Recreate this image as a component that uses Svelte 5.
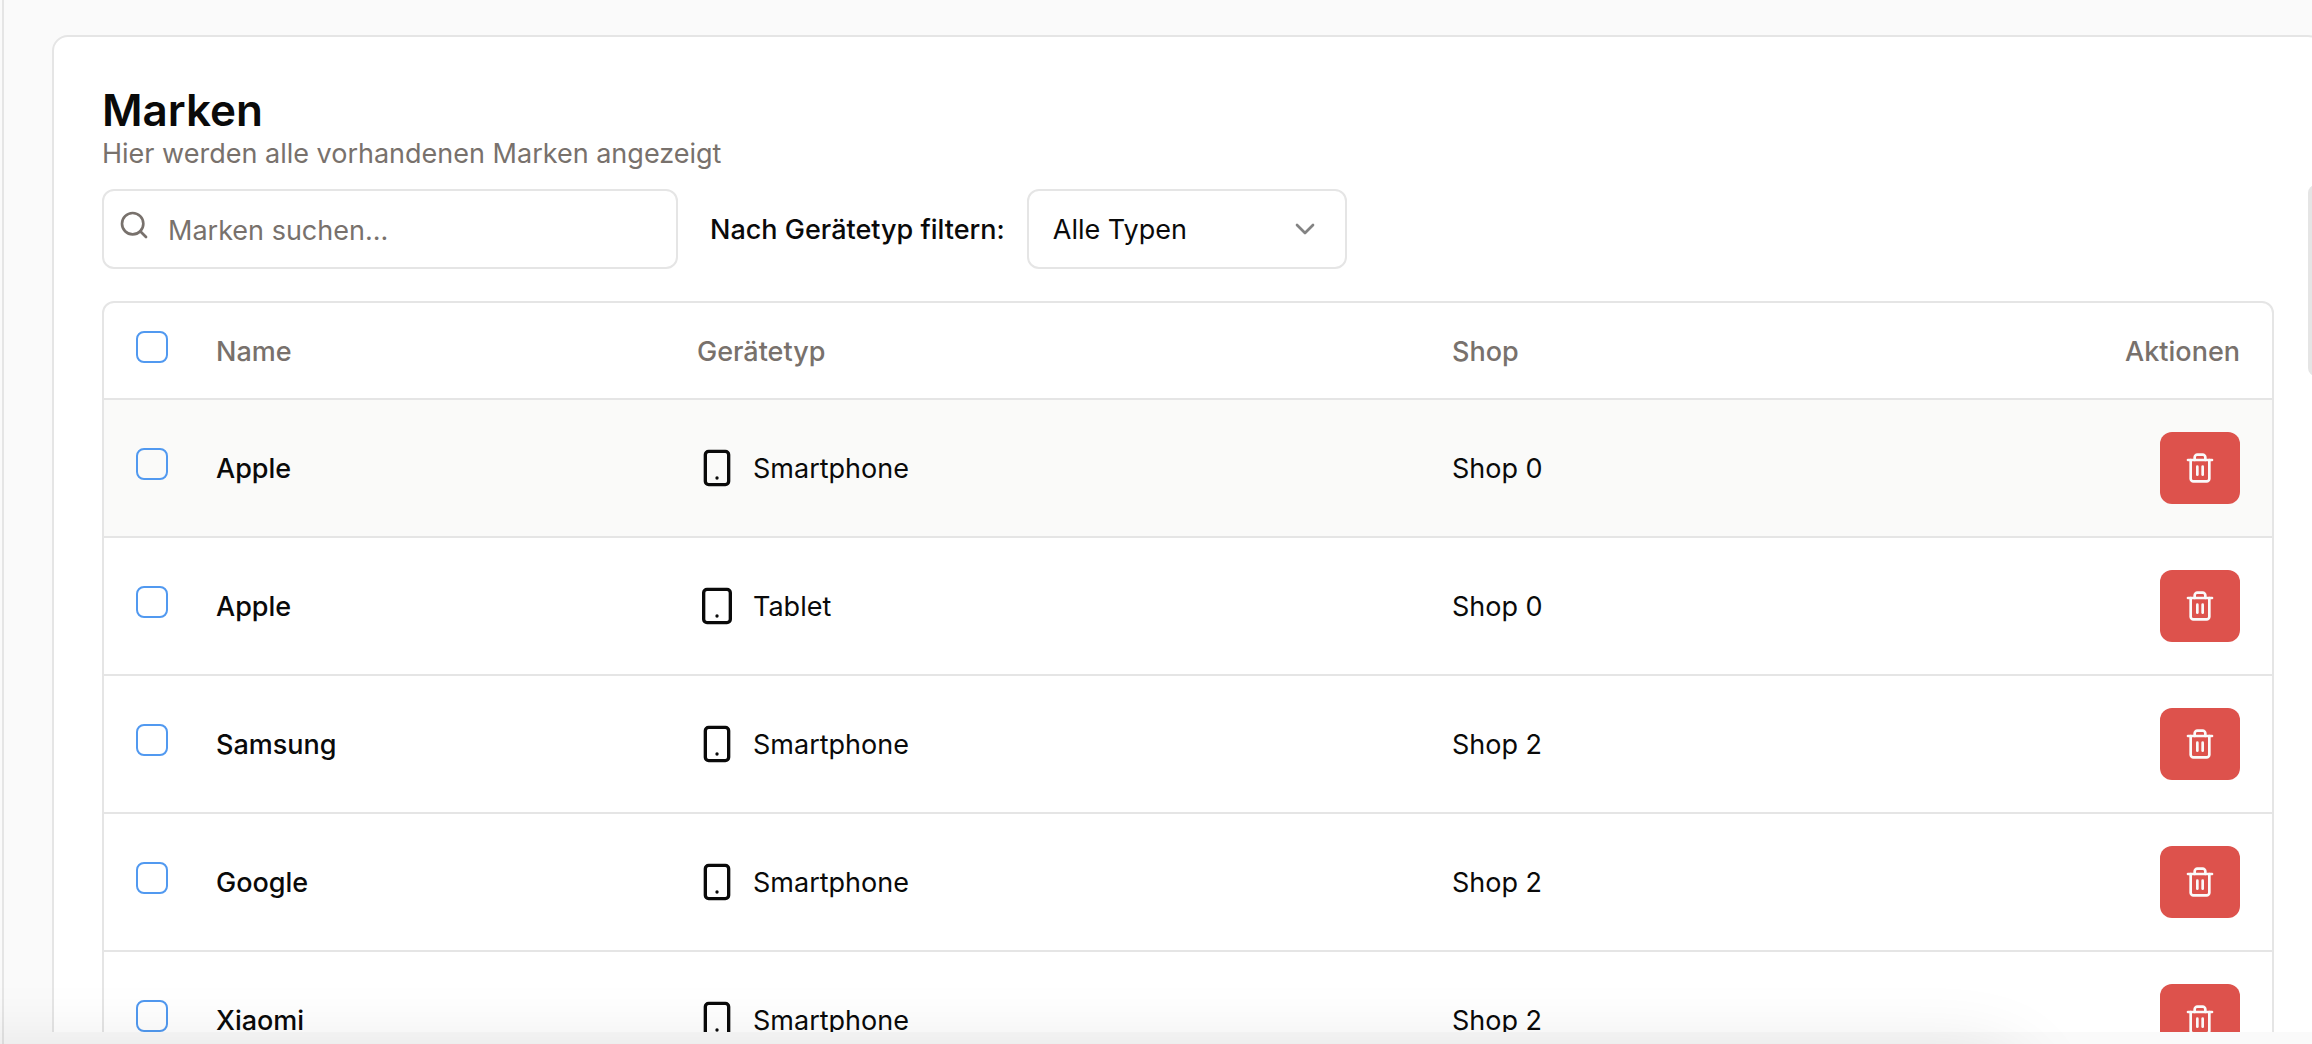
<script>
  const brands = [
    { name: 'Apple', device: 'Smartphone', shop: 'Shop 0' },
    { name: 'Apple', device: 'Tablet', shop: 'Shop 0' },
    { name: 'Samsung', device: 'Smartphone', shop: 'Shop 2' },
    { name: 'Google', device: 'Smartphone', shop: 'Shop 2' },
    { name: 'Xiaomi', device: 'Smartphone', shop: 'Shop 2' }
  ];
</script>

<div class="page">
  <main class="scroller">
    <section class="card">
      <h1>Marken</h1>
      <p class="subtitle">Hier werden alle vorhandenen Marken angezeigt</p>

      <div class="toolbar">
        <div class="search">
          <svg class="icon" viewBox="0 0 24 24" aria-hidden="true">
            <circle cx="11" cy="11" r="8" />
            <path d="m21 21-4.3-4.3" />
          </svg>
          <input type="text" placeholder="Marken suchen..." aria-label="Marken suchen" />
        </div>
        <div class="filter">
          <label for="device-filter">Nach Gerätetyp filtern:</label>
          <div class="select">
            <select id="device-filter">
              <option>Alle Typen</option>
              <option>Smartphone</option>
              <option>Tablet</option>
            </select>
            <svg class="icon" viewBox="0 0 24 24" aria-hidden="true">
              <path d="m6 9 6 6 6-6" />
            </svg>
          </div>
        </div>
      </div>

      <div class="frame">
        <table>
          <colgroup>
            <col class="col-check" />
            <col class="col-name" />
            <col class="col-device" />
            <col />
            <col class="col-actions" />
          </colgroup>
          <thead>
            <tr>
              <th class="control"><input type="checkbox" aria-label="Alle auswählen" /></th>
              <th>Name</th>
              <th>Gerätetyp</th>
              <th>Shop</th>
              <th class="end">Aktionen</th>
            </tr>
          </thead>
          <tbody>
            {#each brands as brand, i}
              <tr class:hovered={i === 0}>
                <td class="control"><input type="checkbox" aria-label={`${brand.name} ${brand.device} auswählen`} /></td>
                <td class="name">{brand.name}</td>
                <td class="control">
                  <div class="device">
                    <svg class="icon" viewBox="0 0 24 24" aria-hidden="true">
                      {#if brand.device === 'Tablet'}
                        <rect x="4" y="2" width="16" height="20" rx="2" />
                      {:else}
                        <rect x="5" y="2" width="14" height="20" rx="2" />
                      {/if}
                      <path d="M12 18h.01" />
                    </svg>
                    <span>{brand.device}</span>
                  </div>
                </td>
                <td>{brand.shop}</td>
                <td class="control end">
                  <button type="button" aria-label={`${brand.name} ${brand.device} löschen`}>
                    <svg class="icon" viewBox="0 0 24 24" aria-hidden="true">
                      <path d="M3 6h18" />
                      <path d="M19 6v14c0 1-1 2-2 2H7c-1 0-2-1-2-2V6" />
                      <path d="M8 6V4c0-1 1-2 2-2h4c1 0 2 1 2 2v2" />
                      <path d="M10 11v6" />
                      <path d="M14 11v6" />
                    </svg>
                  </button>
                </td>
              </tr>
            {/each}
          </tbody>
        </table>
      </div>
    </section>
  </main>
  <div class="thumb"></div>
  <div class="shade"></div>
</div>

<style>
  :global(body) {
    margin: 0;
  }

  .page {
    --line: #e5e5e5;
    --ink: #0a0a0a;
    --muted: #78716c;
    position: relative;
    box-sizing: border-box;
    height: 100vh;
    padding: 0 0 12px 2px;
    overflow: hidden;
    background: linear-gradient(var(--line), var(--line)) 2px 0 / 2px 100% no-repeat #fafafa;
    color: var(--ink);
    font-family: Inter, 'Liberation Sans', sans-serif;
    font-size: 27px;
    line-height: 38px;
  }

  .scroller {
    box-sizing: border-box;
    height: 100%;
    padding: 35px 0 0 50px;
    overflow: hidden;
  }

  .card {
    margin-right: -12px;
    padding: 48px;
    border: 2px solid var(--line);
    border-radius: 16px;
    background: #fff;
  }

  .icon {
    flex: none;
    width: 32px;
    height: 32px;
    fill: none;
    stroke: currentColor;
    stroke-width: 2;
    stroke-linecap: round;
    stroke-linejoin: round;
  }

  h1 {
    margin: 0;
    font-size: 44px;
    font-weight: 600;
    line-height: 50px;
  }

  .subtitle {
    margin: 0;
    color: var(--muted);
  }

  .toolbar {
    display: flex;
    align-items: center;
    gap: 32px;
    margin: 16px 0 32px;
  }

  .search {
    position: relative;
    width: 576px;
  }

  .search .icon {
    position: absolute;
    top: 20px;
    left: 16px;
    color: var(--muted);
  }

  .search input,
  select {
    display: block;
    box-sizing: border-box;
    width: 100%;
    height: 80px;
    border: 2px solid var(--line);
    border-radius: 12px;
    background: #fff;
    color: var(--ink);
    font: inherit;
  }

  .search input {
    padding: 2px 24px 0 64px;
  }

  .search input::placeholder {
    color: var(--muted);
    opacity: 1;
  }

  .filter {
    display: flex;
    align-items: center;
    gap: 22px;
  }

  label {
    padding-top: 2px;
    font-weight: 500;
  }

  .select {
    position: relative;
    width: 320px;
  }

  select {
    padding: 2px 64px 0 24px;
    appearance: none;
  }

  .select .icon {
    position: absolute;
    top: 24px;
    right: 26px;
    opacity: 0.5;
    pointer-events: none;
  }

  .frame {
    border: 2px solid var(--line);
    border-radius: 12px;
    overflow: hidden;
  }

  table {
    width: 100%;
    border-collapse: separate;
    border-spacing: 0;
    table-layout: fixed;
  }

  .col-check {
    width: 80px;
  }

  .col-name {
    width: 481px;
  }

  .col-device {
    width: 755px;
  }

  .col-actions {
    width: 240px;
  }

  th,
  td {
    box-sizing: border-box;
    padding: 2px 32px 0;
    border-bottom: 2px solid var(--line);
    text-align: left;
    vertical-align: middle;
  }

  th {
    height: 97px;
    color: var(--muted);
    font-weight: 500;
  }

  td {
    height: 138px;
  }

  .control {
    padding-top: 0;
  }

  th:first-child,
  td:first-child {
    padding-right: 0;
  }

  .end {
    text-align: right;
  }

  .hovered {
    background: #fafaf9;
  }

  .name {
    font-weight: 500;
  }

  input[type='checkbox'] {
    display: block;
    box-sizing: border-box;
    width: 32px;
    height: 32px;
    margin: 0 0 8px;
    border: 2px solid #5199f0;
    border-radius: 8px;
    appearance: none;
  }

  .device {
    display: flex;
    align-items: center;
    gap: 16px;
  }

  .device .icon {
    width: 40px;
    height: 40px;
  }

  .device span {
    padding-top: 2px;
  }

  button {
    display: inline-flex;
    align-items: center;
    justify-content: center;
    width: 80px;
    height: 72px;
    padding: 0;
    border: 0;
    border-radius: 12px;
    background: #dd524c;
    color: #fafafa;
    vertical-align: middle;
  }

  /* Scrollbar thumb, half outside the right edge */
  .thumb {
    position: absolute;
    top: 185px;
    right: -12px;
    width: 16px;
    height: 191px;
    border-radius: 8px;
    background: var(--line);
  }

  /* Soft shade that rises from the bottom edge */
  .shade {
    position: absolute;
    top: 100%;
    left: -120px;
    right: 290px;
    height: 200px;
    margin-top: 16px;
    border-radius: 40px;
    box-shadow: 0 0 80px rgba(0, 0, 0, 0.14);
    pointer-events: none;
  }
</style>
